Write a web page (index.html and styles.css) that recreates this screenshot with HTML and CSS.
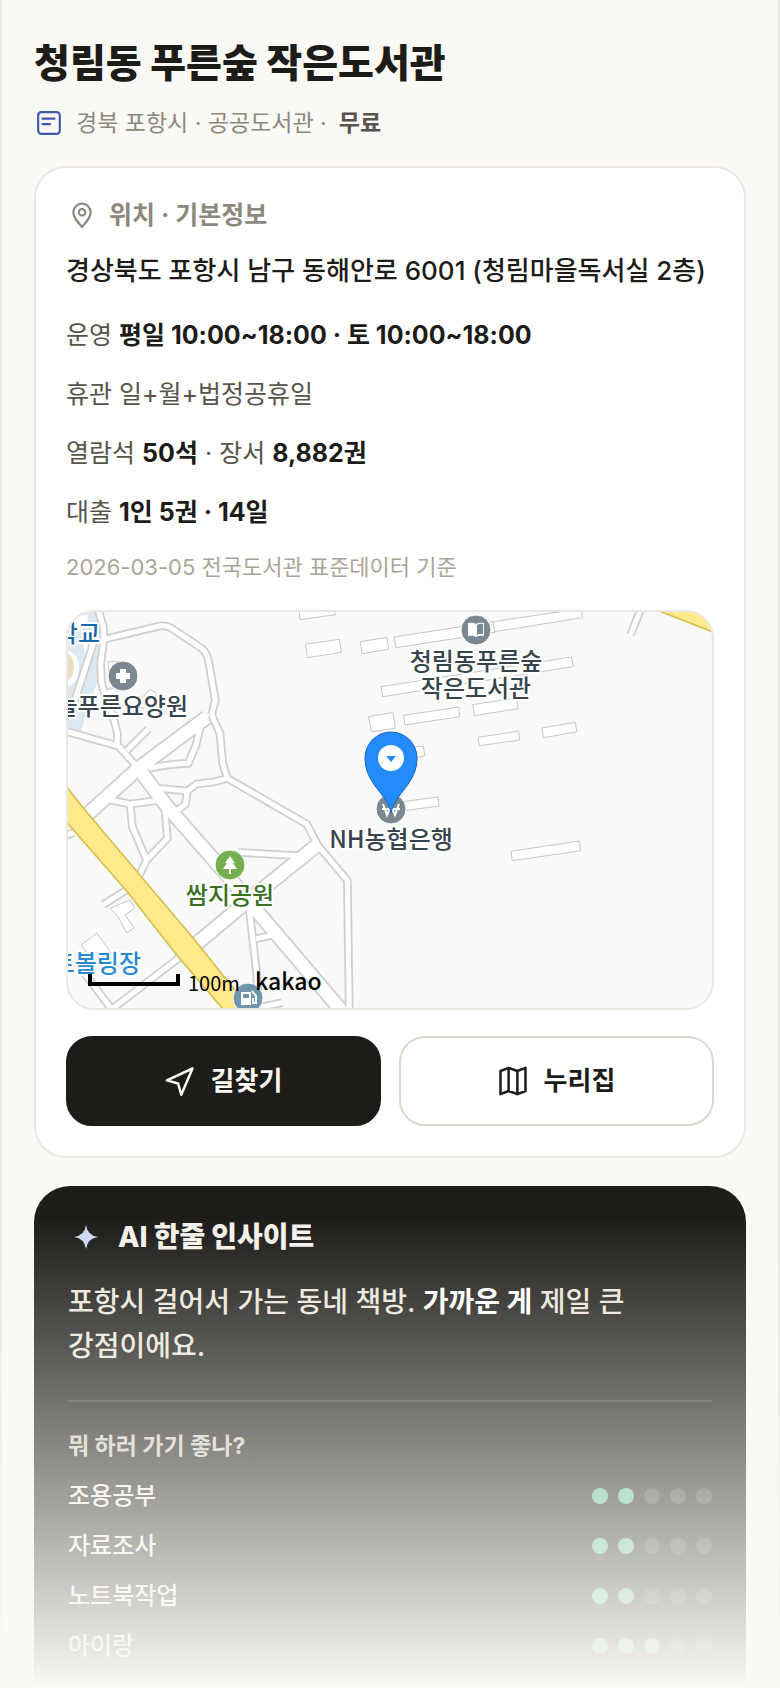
FILE: index.html
```html
<!DOCTYPE html>
<html lang="ko">

<head>
    <meta charset="UTF-8">
    <meta name="viewport" content="width=device-width, initial-scale=1.0">
    <title>청림동 푸른숲 작은도서관</title>
    <link rel="stylesheet" href="styles.css">
</head>

<body>
    <main class="page">
        <header class="head">
            <h1>청림동 푸른숲 작은도서관</h1>
            <p class="sub">
                <svg class="icon blue" viewBox="0 0 24 24" aria-hidden="true">
                    <rect x="2" y="2" width="20" height="20" rx="3" />
                    <path d="M6 8h11M6 13h7" />
                </svg>
                <span>경북 포항시 · 공공도서관 ·</span>
                <b>무료</b>
            </p>
        </header>

        <section class="card">
            <h2 class="label">
                <svg class="icon" viewBox="0 0 24 24" aria-hidden="true">
                    <path d="M12 23C7.500 18 4 14 4 9.500a8 8 0 0 1 16 0C20 14 16.500 18 12 23z" />
                    <circle cx="12" cy="9.500" r="3" />
                </svg>
                위치 · 기본정보
            </h2>
            <p class="address">경상북도 포항시 남구 동해안로 6001 (청림마을독서실 2층)</p>
            <div class="rows">
                <p>운영 <b>평일 10:00~18:00 · 토 10:00~18:00</b></p>
                <p>휴관 일+월+법정공휴일</p>
                <p>열람석 <b>50석</b> · 장서 <b>8,882권</b></p>
                <p>대출 <b>1인 5권 · 14일</b></p>
            </div>
            <p class="note">2026-03-05 전국도서관 표준데이터 기준</p>

            <div class="map">
                <svg viewBox="0 0 644 396" preserveAspectRatio="xMidYMid slice" role="img" aria-label="지도">
                    <defs>
                        <g id="minor">
                            <path d="M112 20L130 80 132 118 122 190 124 245 134 285 158 345 172 400V438" />
                            <path d="M132 118L290 80Q315 73 335 85L425 145Q443 160 447 190L466 300 455 345" />
                            <path d="M134 282L165 272" />
                            <path d="M10 392L175 438 235 505" />
                            <path d="M200 452L265 387" />
                            <path d="M425 365L408 435 385 490Q330 492 265 505" />
                            <path d="M455 345L480 400 488 490 502 535 460 546 410 552 382 573 295 565" />
                            <path d="M502 535L740 672 775 738 862 841 868 1240" />
                            <path d="M140 598L210 612 305 600" />
                            <path d="M210 610L217 680 260 780" />
                            <path d="M315 630L322 715 260 780 238 826" />
                            <path d="M382 573L376 612 355 630" />
                            <path d="M238 846L130 914" />
                            <path d="M535 757L712 767" />
                            <path d="M568 930L590 1120 596 1240" />
                            <path d="M588 1016L650 1003" />
                            <path d="M375 1060L155 1228M70 1115L155 1228" />
                            <path d="M100 130L45 300" />
                            <path d="M1743 26L1712 104" />
                            <path d="M600 1222L666 1208" />
                            <path d="M10 710L40 698" />
                        </g>
                        <g id="major">
                            <path d="M80 645L235 505 440 352" />
                            <path d="M235 505L320 618 510 835 575 915 860 1250" />
                            <path d="M405 1035L570 897 778 730" />
                        </g>
                    </defs>

                    <!-- land, roads and buildings -->
                    <g transform="translate(-8 -12) scale(.33333)">
                        <path fill="#dce9f1" d="M24 36H115L130 120 110 250 62 395 24 385z" />
                        <path fill="#fff" d="M24 50L85 45 80 80 24 95zM24 150Q58 165 57 205 55 250 24 260zM60 75L95 160 75 165z" />
                        <path fill="#e9dec0" d="M24 160Q42 175 42 200 42 228 24 240z" />
                        <g fill="#fff" stroke="#c6c6c6" stroke-width="3">
                            <path d="M717 30L720 59 826 44 824 28z" />
                            <path d="M736 133L838 118 844 157 742 173z" />
                            <path d="M901 125L980 112 986 148 906 161z" />
                            <path d="M1003 111L1300 65 1305 97 1008 143z" />
                            <path d="M1299 65L1564 26 1568 53 1304 95z" />
                            <path d="M963 260L1535 171 1539 200 968 290z" />
                            <path d="M925 350L999 337 1006 385 935 395z" />
                            <path d="M1031 346L1196 321 1199 350 1035 375z" />
                            <path d="M1238 314L1370 294 1374 326 1243 347z" />
                            <path d="M1446 384L1546 367 1550 396 1450 413z" />
                            <path d="M1254 412L1376 394 1379 420 1258 437z" />
                            <path d="M1030 444L1090 438 1094 468 1034 476z" />
                            <path d="M1000 609L1134 591 1137 618 1004 636z" />
                            <path d="M1353 754L1558 723 1562 752 1357 782z" />
                            <path d="M150 925L210 900 224 925 195 945 222 983 200 999 174 950z" />
                            <path d="M64 1035L110 1000 155 1060 108 1095z" />
                            <path d="M146 185H185V230H146z" />
                            <path d="M225 315L270 268 290 280 250 325z" />
                        </g>
                        <g fill="none" stroke="#d0d0d0" stroke-linejoin="round">
                            <use href="#minor" stroke-width="26" />
                            <use href="#major" stroke-width="48" />
                        </g>
                        <g fill="none" stroke="#fff" stroke-linejoin="round">
                            <use href="#minor" stroke-width="15" />
                            <use href="#major" stroke-width="37" />
                        </g>
                        <path fill="#ffe98b" stroke="#d6be4f" stroke-width="5" d="M10 548L60 612 240 826 400 1015 580 1240H500L350 1065 200 873 10 655zM1795 32L1970 100V20z" />
                    </g>

                    <!-- places -->
                    <g stroke="#fff" stroke-width="1">
                        <circle cx="55" cy="64" r="15" fill="#7b888f" />
                        <circle cx="408" cy="18" r="15" fill="#7b888f" />
                        <circle cx="323" cy="197" r="15" fill="#7b888f" />
                        <circle cx="162" cy="253" r="15" fill="#74b04f" />
                        <circle cx="180" cy="386" r="15" fill="#7096ad" />
                    </g>
                    <g fill="#fff">
                        <path d="M52 57h6v4h4v6h-4v4h-6v-4h-4v-6h4z" />
                        <path d="M400 11q5-1 8 1 3-2 8-1v13q-5-1-8 1-3-2-8-1z" />
                        <path fill="#7b888f" d="M409 13q3-2 6-1v10q-3-1-6 1z" />
                        <path d="M162 244l5 7h-2l4 6h-6v5h-2v-5h-6l4-6h-2z" />
                        <path fill-rule="evenodd" d="M173 380h10v13h-10zm2 2v4h6v-4z" />
                        <path fill="none" stroke="#fff" stroke-width="2" d="M184 379l4 5v7h-3v-5" />
                        <path fill="none" stroke="#fff" stroke-width="2" d="M315 192l4 11 4-9 4 9 4-11M314 197h18" />
                    </g>
                    <path fill="#238cfa" stroke="#1a61c4" d="M323 201C319 181 297 172 297 146a26 26 0 0 1 52 0C349 172 327 181 323 201z" />
                    <circle cx="323" cy="146" r="13" fill="#fff" />
                    <path fill="#238cfa" d="M318 144h10l-5 6z" />

                    <g class="place">
                        <text x="408" y="58" text-anchor="middle">청림동푸른숲</text>
                        <text x="408" y="85" text-anchor="middle">작은도서관</text>
                        <text x="323" y="236" text-anchor="middle">NH농협은행</text>
                        <text x="120" y="103" text-anchor="end">늘푸른요양원</text>
                        <text x="162" y="292" text-anchor="middle" class="park">쌈지공원</text>
                        <text x="73" y="360" text-anchor="end" class="sport">트볼링장</text>
                        <text x="32" y="30" text-anchor="end" class="school">학교</text>
                    </g>
                    <path fill="none" stroke="#000" stroke-width="4" d="M22 362v10h88v-10" />
                    <text class="scale" x="120" y="379">100m</text>
                    <text class="brand" x="187" y="378">kakao</text>
                </svg>
            </div>

            <div class="actions">
                <button type="button" class="dark">
                    <svg class="icon" viewBox="0 0 24 24" aria-hidden="true">
                        <path d="M22 2L1.500 11.500l9 2.500L13 23z" />
                    </svg>
                    길찾기
                </button>
                <button type="button">
                    <svg class="icon" viewBox="0 0 24 24" aria-hidden="true">
                        <path d="M2 4l6.500-2.500 7 2.500L22 1.500V20l-6.500 2.500-7-2.500L2 22.500zM8.500 1.500V20M15.500 4v18.500" />
                    </svg>
                    누리집
                </button>
            </div>
        </section>

        <section class="insight">
            <h2>
                <svg class="star" viewBox="0 0 24 24" aria-hidden="true">
                    <path d="M12 0Q13.500 10.500 24 12 13.500 13.500 12 24 10.500 13.500 0 12 10.500 10.500 12 0z" />
                </svg>
                AI 한줄 인사이트
            </h2>
            <p class="summary">포항시 걸어서 가는 동네 책방. <b>가까운 게</b> 제일 큰 강점이에요.</p>
            <h3>뭐 하러 가기 좋나?</h3>
            <ul class="scores">
                <li>조용공부 <span class="dots"><i class="on"></i><i class="on"></i><i></i><i></i><i></i></span></li>
                <li>자료조사 <span class="dots"><i class="on"></i><i class="on"></i><i></i><i></i><i></i></span></li>
                <li>노트북작업 <span class="dots"><i class="on"></i><i class="on"></i><i></i><i></i><i></i></span></li>
                <li>아이랑 <span class="dots"><i class="on"></i><i class="on"></i><i class="on"></i><i></i><i></i></span></li>
            </ul>
        </section>
        <div class="fade"></div>
    </main>
</body>

</html>
```
FILE: styles.css
```css
* {
    box-sizing: border-box;
    margin: 0;
    padding: 0;
}

body {
    background: #faf9f5;
    color: #1d1c18;
    font-family: Inter, "Noto Sans CJK KR", sans-serif;
    word-break: keep-all;
}

.page {
    position: relative;
    min-height: 100vh;
    padding: 37px 32px 4px;
    border: 2px solid #eae8e0;
    border-width: 0 2px;
}

h1 {
    font-size: 39px;
    line-height: 52px;
    font-weight: 800;
}

.icon {
    width: 26px;
    height: 26px;
    flex: none;
    fill: none;
    stroke: currentColor;
    stroke-width: 2;
    stroke-linecap: round;
    stroke-linejoin: round;
}

.blue {
    color: #3f5aa9;
    margin: 0 2px;
}

.sub {
    display: flex;
    align-items: center;
    gap: 12px;
    margin-top: 17px;
    margin-bottom: 26px;
    font-size: 23px;
    line-height: 34px;
    color: #8c887d;
}

.sub b {
    color: #57544c;
}

.card {
    padding: 30px;
    background: #fff;
    border: 2px solid #eae8e0;
    border-radius: 32px;
}

.label {
    display: flex;
    align-items: center;
    gap: 14px;
    padding-left: 3px;
    font-size: 25px;
    line-height: 34px;
    color: #8c887d;
}

.address {
    margin-top: 19px;
    font-size: 26px;
    line-height: 40px;
    font-weight: 500;
}

.rows {
    display: grid;
    gap: 19px;
    margin-top: 24px;
    font-size: 25px;
    line-height: 40px;
    color: #57544c;
}

.rows b {
    color: #1d1c18;
}

.note {
    margin-top: 18px;
    font-size: 22px;
    line-height: 34px;
    color: #aaa598;
}

.map {
    margin: 26px 0;
    border: 2px solid #eae8e0;
    border-radius: 28px;
    overflow: hidden;
    background: #f9f9f9;
}

.map svg {
    display: block;
    width: 100%;
}

.place {
    font-family: "Noto Sans CJK KR", sans-serif;
    font-size: 24px;
    font-weight: 500;
    fill: #37444c;
    stroke: #fff;
    stroke-width: 4px;
    stroke-linejoin: round;
    paint-order: stroke;
}

.place .park {
    fill: #3a701f;
}

.place .sport {
    fill: #2a8bd0;
}

.place .school {
    fill: #1c67b0;
}

.scale {
    font-family: "Noto Sans CJK KR", sans-serif;
    font-size: 20px;
}

.brand {
    font-family: "Noto Sans CJK KR", sans-serif;
    font-size: 23px;
    font-weight: 500;
}

.actions {
    display: grid;
    grid-template-columns: 1fr 1fr;
    gap: 18px;
}

.actions button {
    display: flex;
    align-items: center;
    justify-content: center;
    gap: 16px;
    height: 90px;
    border: 2px solid #dbd8ce;
    border-radius: 26px;
    background: #fff;
    color: #1d1c18;
    font-family: inherit;
    font-size: 26px;
    line-height: 34px;
    font-weight: 700;
}

.actions .icon {
    width: 30px;
    height: 30px;
}

.actions .dark {
    background: #1d1c18;
    border-color: #1d1c18;
    color: #faf9f5;
}

.insight {
    margin-top: 28px;
    padding: 32px 34px 19px;
    border-radius: 36px 36px 0 0;
    background: #1d1c18;
    color: #f3f1ea;
}

.insight h2 {
    display: flex;
    align-items: center;
    gap: 20px;
    padding-left: 6px;
    font-size: 28px;
    line-height: 38px;
    font-weight: 800;
}

.star {
    width: 24px;
    height: 24px;
    fill: #cbd5f2;
}

.summary {
    margin-top: 24px;
    padding-bottom: 32px;
    border-bottom: 2px solid rgba(255, 255, 255, 0.14);
    font-size: 28px;
    line-height: 44px;
    font-weight: 500;
    color: #e9e6dc;
}

.summary b {
    color: #fff;
}

.insight h3 {
    margin-top: 27px;
    font-size: 23px;
    line-height: 34px;
    color: #cfcbbf;
}

.scores {
    display: grid;
    gap: 14px;
    margin-top: 15px;
    list-style: none;
}

.scores li {
    display: flex;
    justify-content: space-between;
    align-items: center;
    font-size: 24px;
    line-height: 36px;
    font-weight: 500;
}

.dots {
    display: flex;
    gap: 10px;
}

.dots i {
    width: 16px;
    height: 16px;
    border-radius: 50%;
    background: rgba(255, 255, 255, 0.16);
}

.dots .on {
    background: #61bc95;
}

.fade {
    position: absolute;
    left: -2px;
    right: -2px;
    bottom: 0;
    height: 470px;
    background: linear-gradient(rgba(250, 249, 245, 0), #faf9f5);
    pointer-events: none;
}
```
